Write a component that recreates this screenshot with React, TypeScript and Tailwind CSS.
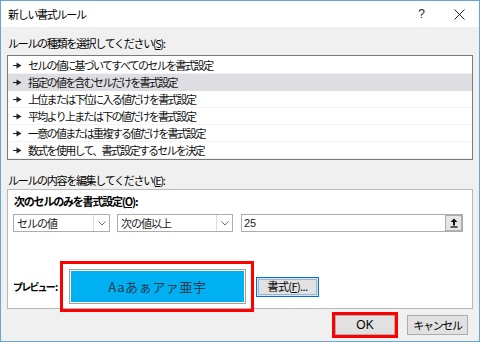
import React from 'react';

const jp = "font-['Noto_Sans_CJK_JP',sans-serif]";

const rules = [
  'セルの値に基づいてすべてのセルを書式設定',
  '指定の値を含むセルだけを書式設定',
  '上位または下位に入る値だけを書式設定',
  '平均より上または下の値だけを書式設定',
  '一意の値または重複する値だけを書式設定',
  '数式を使用して、書式設定するセルを決定',
];

const Marker: React.FC = () => (
  <svg className="w-[9px] h-[7px] shrink-0" viewBox="0 0 9 7">
    <path d="M0 3.5h4" stroke="#222" strokeWidth={1} />
    <path d="M3.5 0.5L8.5 3.5L3.5 6.5Z" fill="#222" />
  </svg>
);

const Chevron: React.FC = () => (
  <svg className="w-[8px] h-[5px]" viewBox="0 0 8 5" fill="none">
    <path d="M0.5 0.5L4 4L7.5 0.5" stroke="#707070" strokeWidth={1} />
  </svg>
);

const Combo: React.FC<{ label: string; width: string }> = ({ label, width }) => (
  <div className={`flex h-[18px] border border-[#adadad] bg-white ${width}`}>
    <div className="flex-1 flex items-center pl-[3px] text-[11px] tracking-[-1px] text-[#1a1a1a] leading-none">
      {label}
    </div>
    <div className="w-[16px] flex items-center justify-center border-l border-[#dcdcdc]">
      <Chevron />
    </div>
  </div>
);

export default function App() {
  return (
    <div className={`w-[480px] h-[342px] border border-[#6aa6cf] bg-[#f0f0f0] flex flex-col relative overflow-hidden ${jp}`}>
      {/* Title bar */}
      <div className="h-[26px] bg-white flex items-center pl-[7px] pr-[14px] shrink-0">
        <span className="text-[11px] tracking-[-1.3px] text-black leading-none mt-[1px]">新しい書式ルール</span>
        <div className="flex-1" />
        <span className="text-[12px] text-[#222] font-['Liberation_Sans',sans-serif] mr-[29px]">?</span>
        <svg className="w-[11px] h-[11px]" viewBox="0 0 11 11">
          <path d="M0.5 0.5L10.5 10.5M10.5 0.5L0.5 10.5" stroke="#222" strokeWidth={1} />
        </svg>
      </div>

      <div className="flex flex-col px-[6px]">
        <div className="mt-[8px] h-[16px] flex items-center pl-[1px] text-[11px] tracking-[-1.3px] leading-none text-black whitespace-pre">
          ルールの種類を選択してください(<span className="underline">S</span>):
        </div>

        {/* Rule type list */}
        <div className="mt-[4px] h-[105px] border border-[#7a7a7a] bg-white pt-[1px] flex flex-col">
          {rules.map((r, i) => (
            <div
              key={r}
              className={`h-[17px] flex items-center gap-[6px] pl-[5px] border-b ${
                i === 1 ? 'bg-[#dddde2] border-[#dddde2]' : 'border-[#f3f3f3]'
              }`}
            >
              <Marker />
              <span className="text-[11px] tracking-[-1.7px] leading-none text-[#111]">{r}</span>
            </div>
          ))}
        </div>

        <div className="mt-[12px] h-[16px] flex items-center pl-[1px] text-[11px] tracking-[-1.3px] leading-none text-black">
          ルールの内容を編集してください(<span className="underline">E</span>):
        </div>

        {/* Rule description group */}
        <div className="mt-[1px] h-[120px] border border-[#b9b9b9] bg-white flex flex-col px-[5px]">
          <div className="mt-[3px] h-[16px] flex items-center pl-[1px] text-[11px] font-bold tracking-[-1.2px] leading-none text-black">
            次のセルのみを書式設定(<span className="underline">O</span>):
          </div>

          <div className="mt-[5px] flex items-center">
            <Combo label="セルの値" width="w-[97px]" />
            <div className="w-[7px]" />
            <Combo label="次の値以上" width="w-[116px]" />
            <div className="w-[8px]" />
            <div className="flex h-[18px] w-[222px] border border-[#adadad] bg-white">
              <div className="flex-1 flex items-center pl-[2px] text-[11px] text-[#222] leading-none font-['Liberation_Sans',sans-serif]">
                25
              </div>
              <div className="w-[17px] h-[16px] bg-[#e6e6e6] border border-[#adadad] flex items-center justify-center">
                <svg className="w-[8px] h-[10px]" viewBox="0 0 8 10">
                  <path d="M4 0.5L7.5 4H5V7.5H3V4H0.5Z" fill="#111" />
                  <path d="M0.5 9H7.5" stroke="#111" strokeWidth={1.3} />
                </svg>
              </div>
            </div>
          </div>

          {/* Preview row */}
          <div className="mt-[37px] flex items-center">
            <div className="w-[56px] shrink-0 whitespace-nowrap text-[10px] font-bold tracking-[-1.8px] leading-none text-black">
              プレビュー<span className="ml-[1px]">:</span>
            </div>
            <div className="w-[177px] h-[35px] border border-[#a0a0a0] p-[1px] bg-white">
              <div className="h-full bg-[#00b0f0] flex items-center justify-center text-[13px] tracking-[0.6px] text-[#203a52] leading-none">
                Aaあぁアァ亜宇
              </div>
            </div>
            <div className="ml-[10px] w-[63px] h-[20px] border border-[#0a70c6] bg-[#e1e1e1] flex items-center justify-center">
              <div className="w-[59px] h-[16px] border border-[#8fbbe3] flex items-center justify-center text-[11px] tracking-[-0.6px] leading-none text-black whitespace-pre">
                書式(<span className="underline">F</span>)...
              </div>
            </div>
          </div>
        </div>

        {/* Buttons */}
        <div className="mt-[6px] flex justify-end gap-[12px] pr-[5px]">
          <div className="w-[60px] h-[20px] border border-[#adadad] bg-[#e1e1e1] flex items-center justify-center text-[12px] leading-none text-black font-['Liberation_Sans',sans-serif]">
            OK
          </div>
          <div className="w-[61px] h-[20px] border border-[#adadad] bg-[#e1e1e1] flex items-center justify-center text-[11px] tracking-[-1.3px] leading-none text-black">
            キャンセル
          </div>
        </div>
      </div>

      {/* Red annotation boxes */}
      <div className="absolute left-[59px] top-[260px] w-[194px] h-[51px] border-[3px] border-[#ff0000] pointer-events-none" />
      <div className="absolute left-[331px] top-[311px] w-[66px] h-[26px] border-[3px] border-[#ff0000] pointer-events-none" />
    </div>
  );
}
